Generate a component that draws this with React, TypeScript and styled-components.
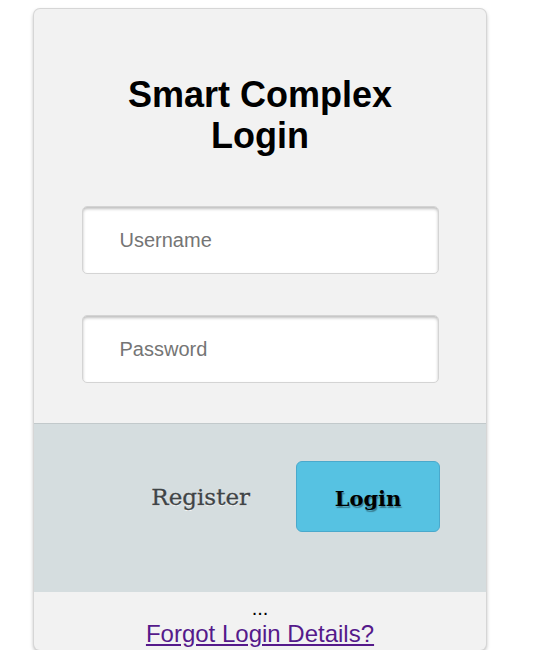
import React from "react";
import styled, { createGlobalStyle } from "styled-components";

const GlobalStyle = createGlobalStyle`
  html, body {
    margin: 0;
    padding: 0;
    background: #ffffff;
    font-family: "Liberation Sans", Arial, sans-serif;
  }
`;

const Page = styled.div`
  padding: 9px 0 0 34px;
`;

const Card = styled.div`
  width: 452px;
  background: #f2f2f2;
  border-radius: 6px;
  box-shadow: 0 0 0 1px #d6d6d6, 0 2px 4px rgba(0, 0, 0, 0.35);
  overflow: hidden;
  display: flex;
  flex-direction: column;
`;

const Top = styled.div`
  padding: 65px 47px 40px;
  display: flex;
  flex-direction: column;
  align-items: center;
`;

const Title = styled.h1`
  margin: 0 0 50px;
  font-size: 36px;
  line-height: 41px;
  font-weight: 700;
  color: #000;
  text-align: center;
  width: 357px;
`;

const Field = styled.input<{ $gap?: number }>`
  box-sizing: border-box;
  width: 357px;
  height: 68px;
  margin-top: ${(p) => p.$gap ?? 0}px;
  padding: 0 0 0 37px;
  border: 1px solid #d4d4d4;
  border-radius: 5px;
  background: #fff;
  box-shadow: inset 0 2px 3px rgba(0, 0, 0, 0.25);
  font-family: "Liberation Sans", Arial, sans-serif;
  font-size: 20px;
  color: #333;
  outline: none;
  &::placeholder {
    color: #757575;
  }
`;

const Actions = styled.div`
  box-sizing: border-box;
  height: 169px;
  background: #d5dddf;
  border-top: 1px solid #c2c9cb;
  display: flex;
  justify-content: flex-end;
  align-items: flex-start;
  gap: 46px;
  padding: 37px 46px 0 0;
`;

const slab = `"DejaVu Serif", serif`;

const RegisterLink = styled.a`
  height: 71px;
  display: flex;
  align-items: center;
  padding-top: 0;
  font-family: ${slab};
  font-size: 23px;
  color: #3f4446;
  text-decoration: none;
  text-shadow: 0 1px 0 #fff;
  -webkit-text-stroke: 0.3px #3f4446;
  cursor: pointer;
`;

const LoginButton = styled.button`
  box-sizing: border-box;
  width: 144px;
  height: 71px;
  background: #56c2e2;
  border: 1px solid #4aa9cc;
  border-radius: 6px;
  font-family: ${slab};
  font-weight: 700;
  font-size: 21px;
  color: #000;
  text-shadow: 1px 2px 1px rgba(0, 0, 0, 0.35);
  cursor: pointer;
  padding: 4px 0 0;
`;

const Bottom = styled.div`
  padding: 5px 0 2px;
  text-align: center;
`;

const Dots = styled.div`
  font-size: 20px;
  line-height: 23px;
  color: #000;
`;

const Forgot = styled.a`
  font-size: 24px;
  line-height: 28px;
  color: #551a8b;
  text-decoration: underline;
`;

export default function App() {
  return (
    <>
      <GlobalStyle />
      <Page>
        <Card>
          <Top>
            <Title>Smart Complex Login</Title>
            <Field type="text" placeholder="Username" />
            <Field type="password" placeholder="Password" $gap={41} />
          </Top>
          <Actions>
            <RegisterLink>Register</RegisterLink>
            <LoginButton>Login</LoginButton>
          </Actions>
          <Bottom>
            <Dots>...</Dots>
            <Forgot href="#">Forgot Login Details?</Forgot>
          </Bottom>
        </Card>
      </Page>
    </>
  );
}
